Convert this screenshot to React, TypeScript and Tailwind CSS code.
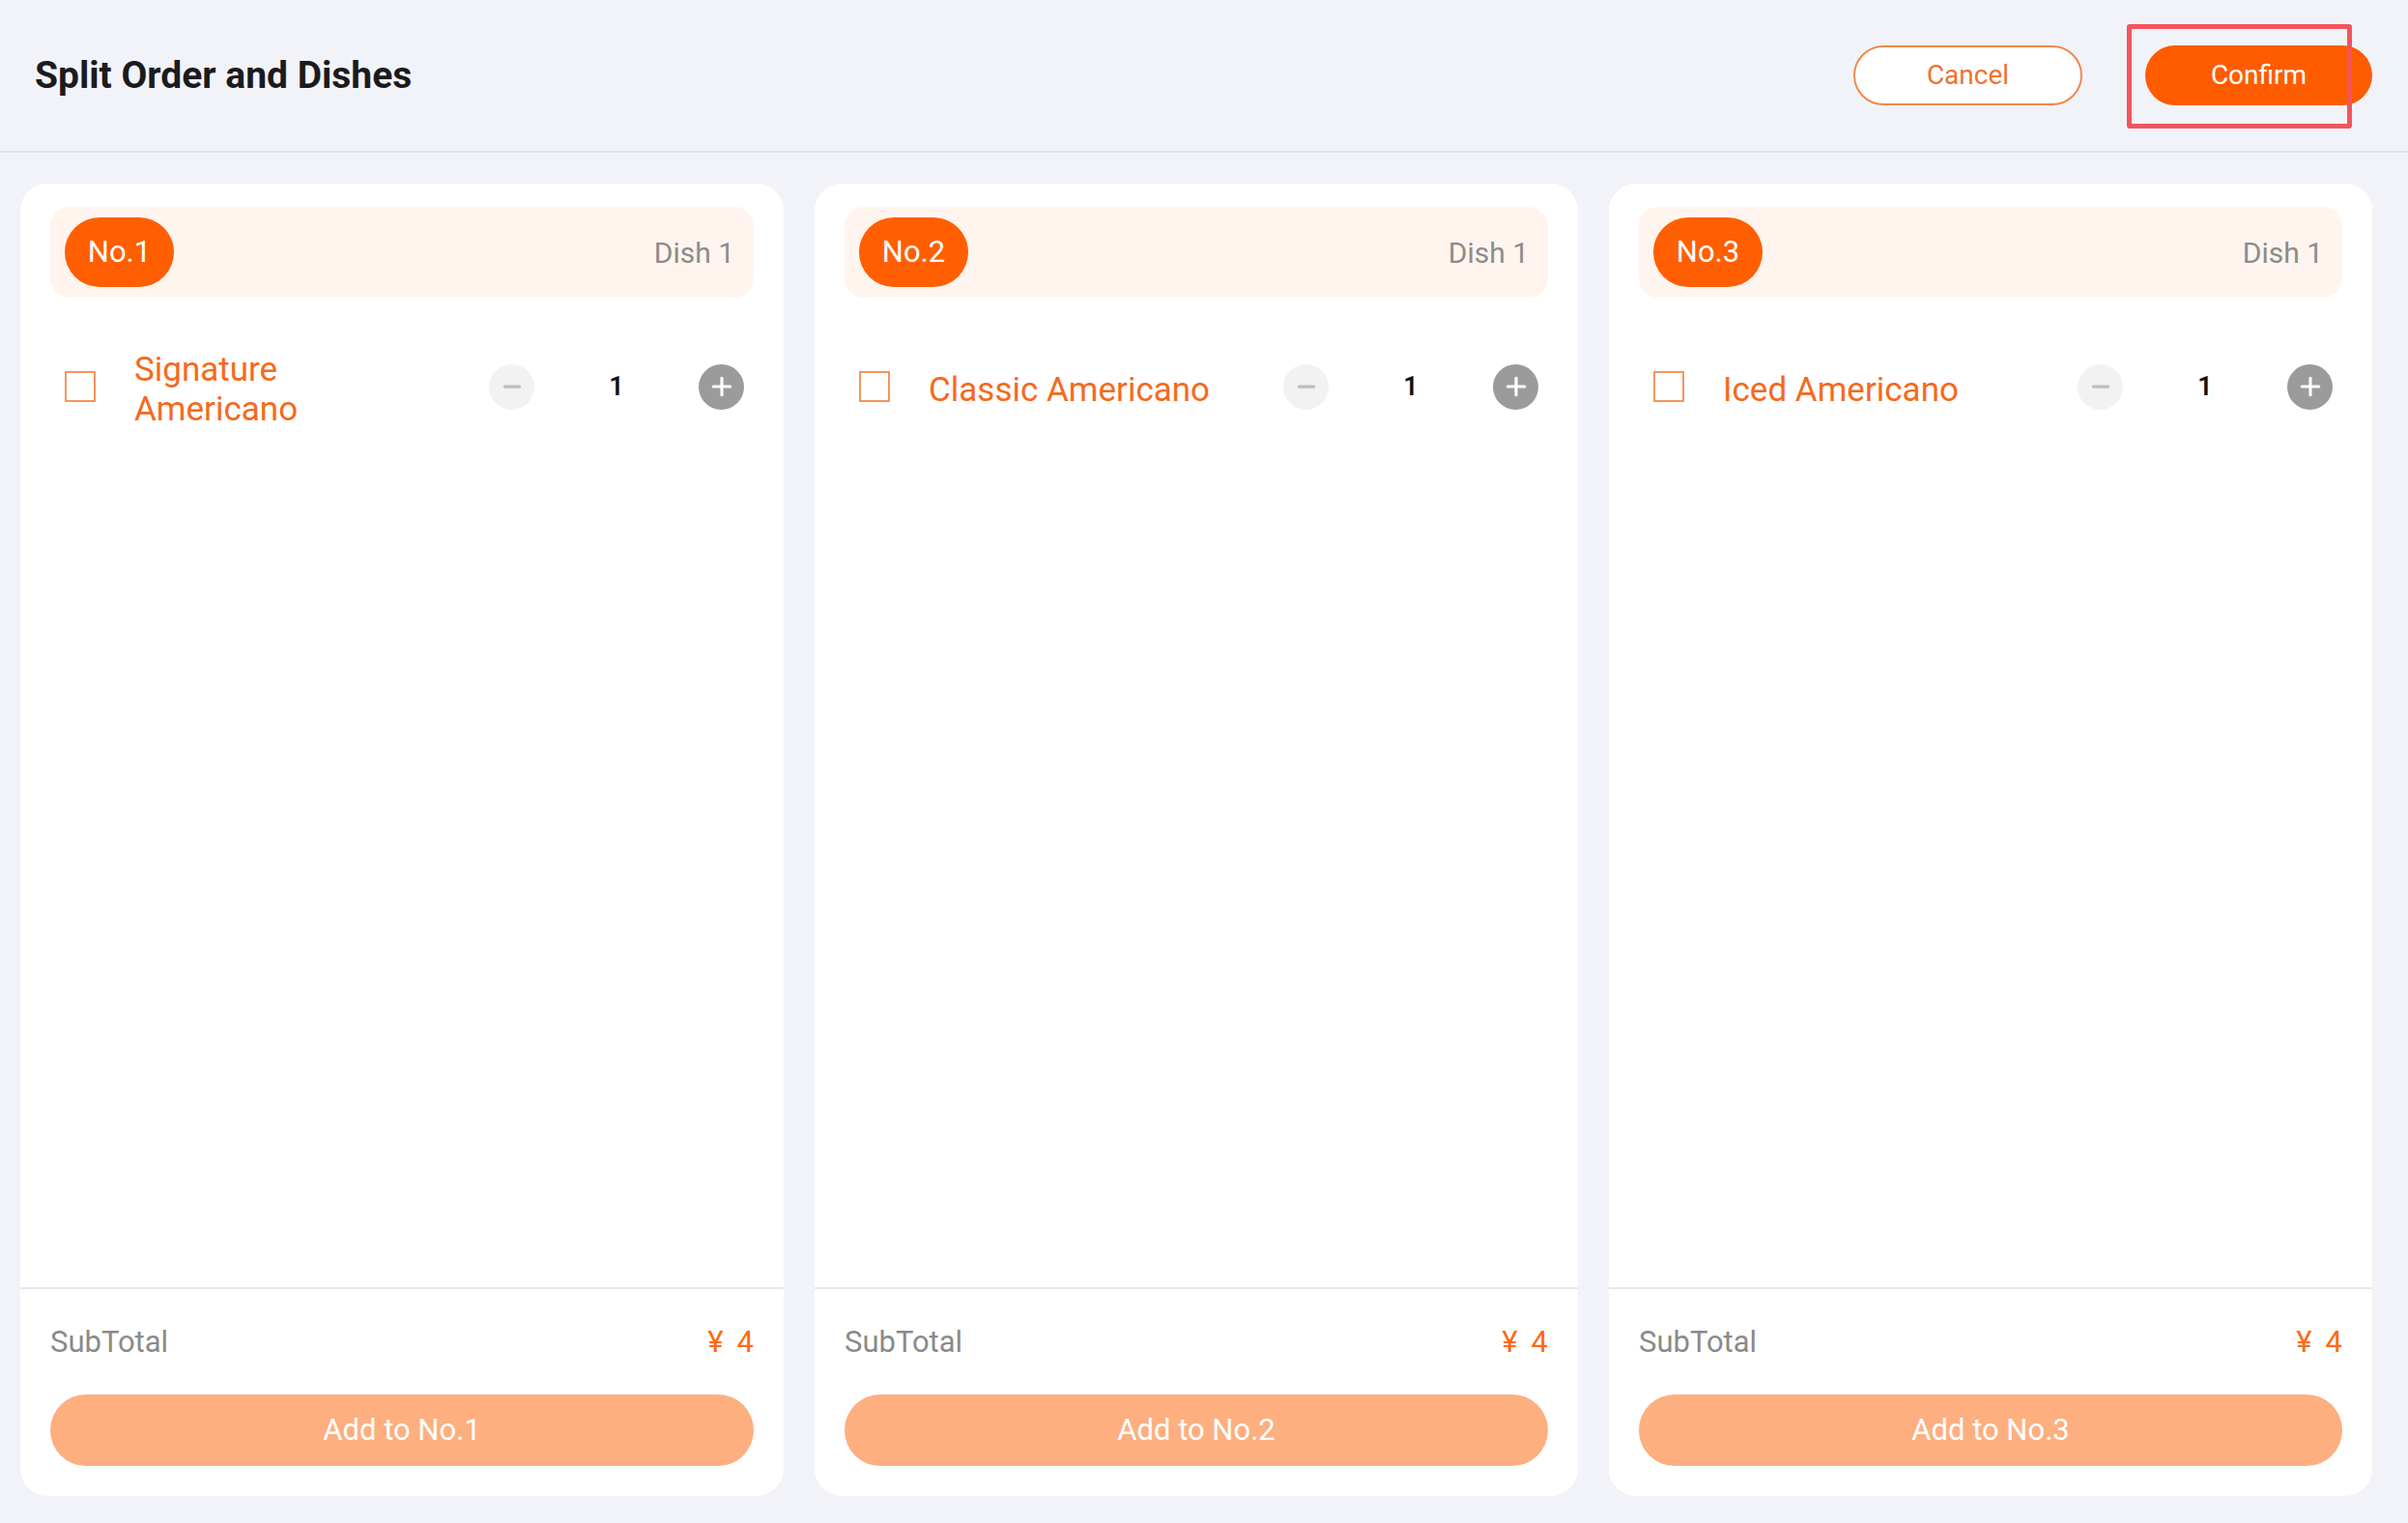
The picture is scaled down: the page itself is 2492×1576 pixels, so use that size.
import { Minus, Plus } from "lucide-react";

const orders = [
  { no: "No.1", dish: "Signature Americano" },
  { no: "No.2", dish: "Classic Americano" },
  { no: "No.3", dish: "Iced Americano" },
];

function OrderCard({ no, dish }: { no: string; dish: string }) {
  return (
    <div className="flex min-h-0 flex-1 flex-col rounded-[28px] bg-white">
      <div className="flex-1 px-[31px] pt-[24px]">
        {/* Order header */}
        <div className="flex h-[94px] items-center justify-between rounded-[20px] bg-[#fff5ee] pl-[15px] pr-[20px]">
          <span className="flex h-[72px] w-[113px] items-center justify-center rounded-full bg-[#ff5f00] text-[31px] text-white">
            {no}
          </span>
          <span className="text-[30px] text-[#8c8c8c]">Dish 1</span>
        </div>

        {/* Dish row */}
        <div className="mt-[48px] flex h-[94px] items-center pl-[15px] pr-[10px]">
          <span className="mb-[6px] h-[32px] w-[32px] shrink-0 border-2 border-[#f7945c] bg-white" />
          <span className="ml-[40px] w-[310px] text-[35px] leading-[41px] text-[#f56a1c]">
            {dish}
          </span>
          <div className="mb-[6px] ml-auto flex items-center">
            <button className="flex h-[47px] w-[47px] items-center justify-center rounded-full bg-[#f2f2f2]">
              <Minus className="h-[26px] w-[26px] text-[#bdbdbd]" strokeWidth={3} />
            </button>
            <span className="w-[170px] text-center text-[27px] font-semibold text-[#111]">1</span>
            <button className="flex h-[47px] w-[47px] items-center justify-center rounded-full bg-[#9b9b9b]">
              <Plus className="h-[30px] w-[30px] text-white" strokeWidth={2.5} />
            </button>
          </div>
        </div>
      </div>

      {/* Footer */}
      <div className="border-t-2 border-[#e8e8ec] px-[31px] pb-[31px] pt-[37px]">
        <div className="flex h-[36px] items-center justify-between text-[31px]">
          <span className="text-[#8a8a8a]">SubTotal</span>
          <span className="flex gap-[14px] text-[#ff6a10]">
            <span>¥</span>
            <span>4</span>
          </span>
        </div>
        <button className="mt-[36px] flex h-[74px] w-full items-center justify-center rounded-full bg-[#fdaf80] text-[31px] text-white">
          Add to {no}
        </button>
      </div>
    </div>
  );
}

export default function App() {
  return (
    <div
      className="flex h-screen w-full flex-col bg-[#f2f3f9]"
      style={{ fontFamily: "Roboto, 'Noto Sans', sans-serif" }}
    >
      {/* Header */}
      <div className="flex h-[158px] shrink-0 items-center justify-between border-b-2 border-[#e2e3e9] pl-[36px] pr-[37px]">
        <h1 className="text-[39px] font-bold text-[#1b1b1d]">Split Order and Dishes</h1>
        <div className="flex items-center gap-[65px]">
          <button className="flex h-[62px] w-[237px] items-center justify-center rounded-full border-2 border-[#f2874c] bg-white text-[28px] text-[#f0722e]">
            Cancel
          </button>
          <div className="relative">
            <button className="flex h-[62px] w-[235px] items-center justify-center rounded-full bg-[#ff5c00] text-[28px] text-white">
              Confirm
            </button>
            <div className="absolute left-[-19px] top-[-22px] h-[108px] w-[233px] rounded-[3px] border-[5px] border-[#f4555d]" />
          </div>
        </div>
      </div>

      {/* Cards */}
      <div className="flex min-h-0 flex-1 gap-[32px] pb-[28px] pl-[21px] pr-[37px] pt-[32px]">
        {orders.map((o) => (
          <OrderCard key={o.no} no={o.no} dish={o.dish} />
        ))}
      </div>
    </div>
  );
}
